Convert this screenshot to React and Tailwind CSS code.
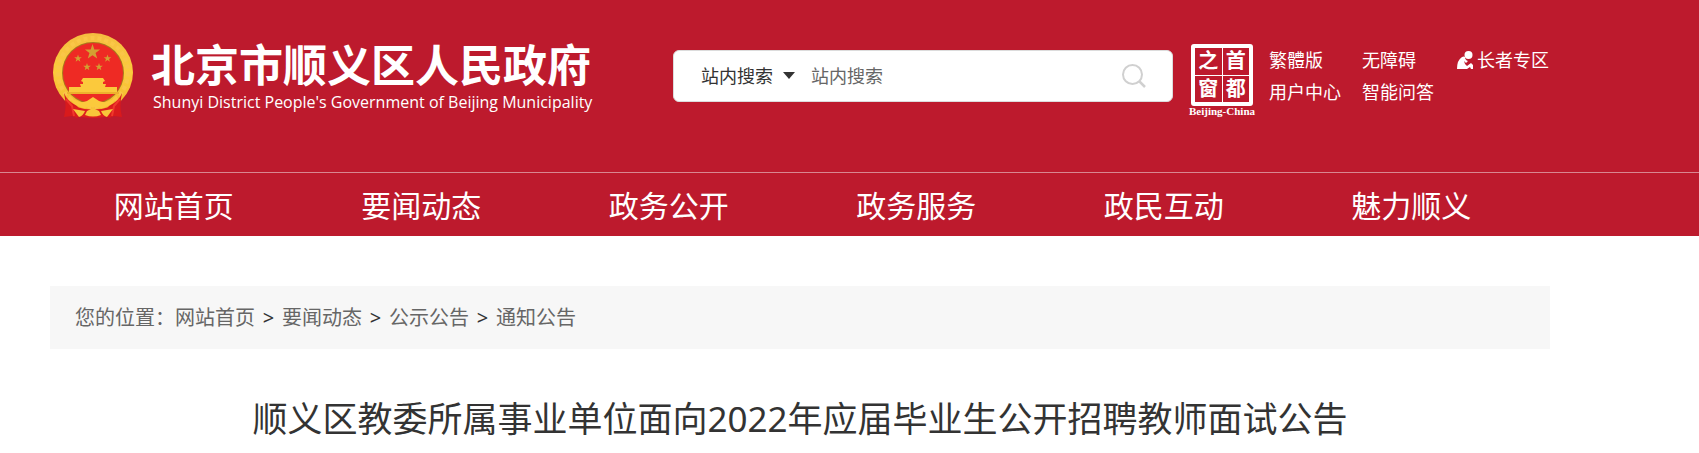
const navItems = ['网站首页', '要闻动态', '政务公开', '政务服务', '政民互动', '魅力顺义'];

const crumbs = ['网站首页', '要闻动态', '公示公告', '通知公告'];

const starPoints = (cx, cy, r) =>
  Array.from({ length: 10 }, (_, i) => {
    const radius = i % 2 ? r * 0.4 : r;
    const angle = (Math.PI / 5) * i - Math.PI / 2;
    return `${cx + radius * Math.cos(angle)},${cy + radius * Math.sin(angle)}`;
  }).join(' ');

function Emblem() {
  return (
    <svg viewBox="0 0 80 86" className="h-[86px] w-20 shrink-0" aria-hidden="true">
      <defs>
        <linearGradient id="gold" x1="0" y1="0" x2="0" y2="1">
          <stop offset="0" stopColor="#f5bd40" />
          <stop offset="0.5" stopColor="#fbcb3c" />
          <stop offset="1" stopColor="#f3b52c" />
        </linearGradient>
      </defs>
      {/* wreath */}
      <ellipse cx="40" cy="39.5" rx="40" ry="39.5" fill="url(#gold)" />
      <ellipse cx="40" cy="39.5" rx="35" ry="34.5" fill="none" stroke="#fac648" strokeWidth="4" strokeDasharray="4 3" />
      <circle cx="40" cy="40" r="31" fill="#a8781d" />
      <circle cx="40" cy="40" r="30" fill="#ee2a24" />
      {/* stars */}
      <g fill="#d3a032">
        <polygon points={starPoints(39.5, 19, 8)} />
        <polygon points={starPoints(25, 25.5, 4)} />
        <polygon points={starPoints(34, 34, 4)} />
        <polygon points={starPoints(46, 34, 4)} />
        <polygon points={starPoints(54.5, 25.5, 4)} />
      </g>
      {/* gate */}
      <g fill="#fbc93c">
        <path d="M30 45h20l2 3-2 1v2h3l-1 3H28l-1-3h3v-2l-2-1z" />
        <path d="M16 54h48v5H16z" />
        <path d="M14 59h52v2H14z" fill="#eeb02d" />
      </g>
      {/* ribbons */}
      <path d="M11 60q3 8 13 13l6 7-6 5-5-2-8 1q3-11 0-24z" fill="#d91a1c" />
      <path d="M69 60q-3 8-13 13l-6 7 6 5 5-2 8 1q-3-11 0-24z" fill="#d91a1c" />
      <path d="M20 73q20 7 40 0l-4 10q-16 4-32 0z" fill="#dd1f1e" />
      <path d="M13 66l6 7 2 10M67 66l-6 7-2 10" fill="none" stroke="#f0382c" strokeWidth="2" />
      <path d="M15 62q10 10 19 6l6-4 6 4q9 4 19-6-4 10-15 13-5 0-7-2l-3 2-3-2q-2 2-7 2-11-3-15-13z" fill="#fbc93c" />
      <path d="M20 76l12 2q-2 5-6 6zM60 76l-12 2q2 5 6 6zM34 78l6-3 6 3 2 4q-8 3-16 0z" fill="#f8c63a" />
    </svg>
  );
}

function Seal() {
  return (
    <a href="#" className="flex w-[70px] flex-col items-center text-white">
      <span className="grid h-[62px] w-[62px] grid-cols-2 gap-px rounded-[3px] border-4 border-white bg-white text-xl leading-[26px] font-bold">
        {['之', '首', '窗', '都'].map((char) => (
          <span key={char} className="bg-[#bd1a2d] text-center">
            {char}
          </span>
        ))}
      </span>
      <span className="font-['Liberation_Serif',serif] text-[11px] leading-[10px] font-bold whitespace-nowrap">
        Beijing-China
      </span>
    </a>
  );
}

function SearchBox() {
  return (
    <form className="flex h-[52px] w-[500px] items-center rounded-md border border-[#dcdcdc] bg-white pl-[27px] pr-[26px] text-lg">
      <div className="relative w-[110px]">
        <select aria-label="搜索范围" className="w-full appearance-none bg-transparent text-[#333] focus:outline-none">
          <option>站内搜索</option>
        </select>
        <svg viewBox="0 0 12 7" className="pointer-events-none absolute top-2.5 left-[82px] h-[7px] w-3" aria-hidden="true">
          <path d="M0 0h12L6 7z" fill="#333" />
        </svg>
      </div>
      <input
        type="text"
        aria-label="站内搜索"
        placeholder="站内搜索"
        className="min-w-0 flex-1 text-[#333] placeholder-[#666] focus:outline-none"
      />
      <button type="submit" aria-label="搜索">
        <svg viewBox="0 0 24 24" className="h-6 w-6" fill="none" stroke="#d0d0d0" strokeWidth="2">
          <circle cx="10.5" cy="10.5" r="9.5" />
          <path d="M17 17l6 6" strokeWidth="2.5" />
        </svg>
      </button>
    </form>
  );
}

function QuickLinks() {
  return (
    <div className="grid grid-cols-[93px_95px_auto] content-start text-lg leading-8 whitespace-nowrap text-white">
      <a href="#">繁體版</a>
      <a href="#">无障碍</a>
      <a href="#" className="flex items-center gap-1">
        <svg viewBox="0 0 16 19" className="h-[19px] w-4" fill="#fff" aria-hidden="true">
          <circle cx="11.5" cy="4" r="4" />
          <path d="M5 6q2-1 3 0 0 3 3 4l-2 2-2-2 1 3 2 2 4-3 2 2v4h-2l-1-2-3 2H0q0-9 5-12z" />
        </svg>
        长者专区
      </a>
      <a href="#">用户中心</a>
      <a href="#">智能问答</a>
    </div>
  );
}

export default function App() {
  return (
    <div className="font-['Noto_Sans','Noto_Sans_CJK_SC',sans-serif]">
      <header className="bg-[#bd1a2d]">
        <div className="ml-[50px] flex h-[172px] max-w-[1500px] items-start">
          <a href="#" className="flex w-[623px] pt-[33px] pl-[3px] text-white">
            <Emblem />
            <span className="flex flex-col pt-2 pl-[18px] whitespace-nowrap">
              <span className="text-[44px] leading-[48px] font-bold">北京市顺义区人民政府</span>
              <span className="pt-[3px] pl-0.5 font-['Open_Sans',sans-serif] text-base leading-5">
                Shunyi District People's Government of Beijing Municipality
              </span>
            </span>
          </a>
          <div className="pt-[50px]">
            <SearchBox />
          </div>
          <div className="flex gap-3 pt-11 pl-[14px]">
            <Seal />
            <QuickLinks />
          </div>
        </div>
        <nav className="border-t border-[#d98791] pt-[3px]">
          <ul className="ml-[50px] grid max-w-[1485px] grid-cols-6 text-center text-[30px] leading-[60px] text-white">
            {navItems.map((item) => (
              <li key={item}>
                <a href="#">{item}</a>
              </li>
            ))}
          </ul>
        </nav>
      </header>

      <main className="mt-[50px] ml-[50px] max-w-[1500px]">
        <div className="flex bg-[#f7f7f7] px-[25px] text-xl leading-[63px] text-[#666]">
          <span>您的位置：</span>
          {crumbs.map((crumb, i) => (
            <span key={crumb} className="flex">
              {i > 0 && <span className="w-[27px] text-center text-[#333]">&gt;</span>}
              <a href="#">{crumb}</a>
            </span>
          ))}
        </div>
        <h1 className="mt-[42px] text-center text-[35px] leading-[56px] text-[#333]">
          顺义区教委所属事业单位面向2022年应届毕业生公开招聘教师面试公告
        </h1>
      </main>
    </div>
  );
}
